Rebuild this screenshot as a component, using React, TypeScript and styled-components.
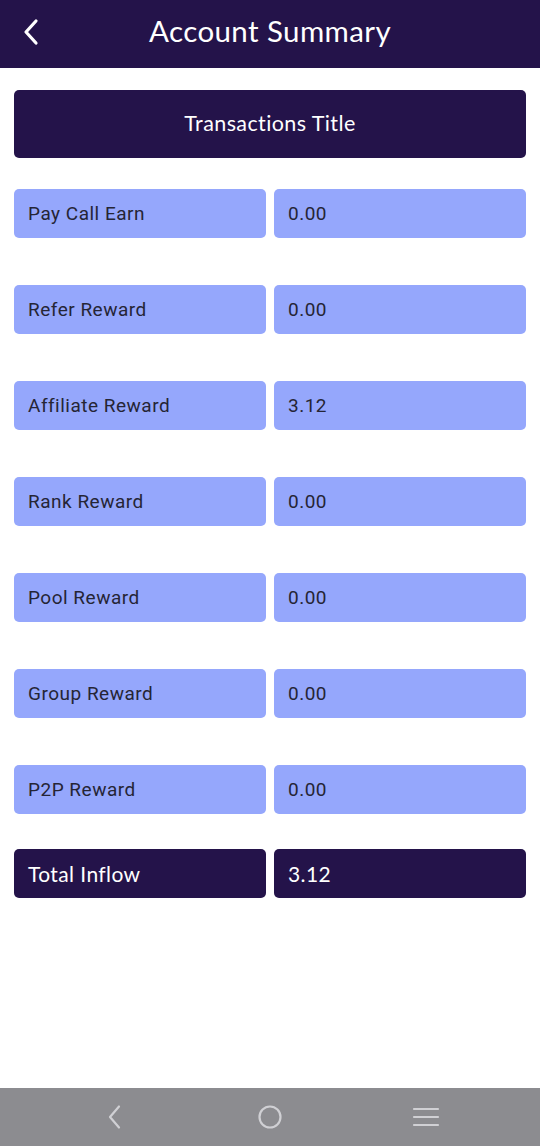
import React from "react";
import styled, { createGlobalStyle } from "styled-components";

const Global = createGlobalStyle`
  html, body { margin: 0; padding: 0; background: #fff; }
  * { box-sizing: border-box; }
`;

const DARK = "#24134a";
const LIGHT = "#95a7fc";

const Page = styled.div`
  width: 540px;
  height: 1146px;
  display: flex;
  flex-direction: column;
  background: #fff;
  overflow: hidden;
`;

const Header = styled.header`
  height: 68px;
  background: ${DARK};
  display: flex;
  align-items: center;
  position: relative;
  justify-content: center;
`;

const BackBtn = styled.div`
  position: absolute;
  left: 18px;
  top: 17px;
  width: 26px;
  height: 30px;
  display: flex;
  align-items: center;
  justify-content: center;
`;

const Title = styled.h1`
  margin: 0;
  margin-top: -7px;
  font-family: "Lato", "Noto Sans", sans-serif;
  font-weight: 400;
  font-size: 29.5px;
  color: #fff;
  letter-spacing: 0.4px;
`;

const Content = styled.main`
  padding: 22px 14px 0 14px;
  display: flex;
  flex-direction: column;
`;

const Banner = styled.div`
  height: 68px;
  padding-bottom: 2px;
  background: ${DARK};
  border-radius: 5px;
  display: flex;
  align-items: center;
  justify-content: center;
  font-family: "Lato", "Noto Sans", sans-serif;
  font-size: 21.5px;
  color: #fff;
  letter-spacing: 0.4px;
  margin-bottom: 31px;
`;

const List = styled.div`
  display: flex;
  flex-direction: column;
  gap: 47px;
`;

const Row = styled.div<{ $total?: boolean }>`
  display: grid;
  grid-template-columns: 1fr 1fr;
  gap: 8px;
  margin-top: ${(p) => (p.$total ? "-12px" : "0")};
`;

const Cell = styled.div<{ $total?: boolean }>`
  height: 49px;
  border-radius: 5px;
  background: ${(p) => (p.$total ? DARK : LIGHT)};
  color: ${(p) => (p.$total ? "#fff" : "#252535")};
  display: flex;
  align-items: center;
  padding-left: 14px;
  font-family: ${(p) =>
    p.$total ? `"Lato", "Noto Sans", sans-serif` : `"Roboto", sans-serif`};
  font-size: ${(p) => (p.$total ? "21px" : "19px")};
  letter-spacing: ${(p) => (p.$total ? "0.4px" : "0.5px")};
`;

const NavBar = styled.nav`
  margin-top: auto;
  height: 58px;
  background: #8c8c90;
  display: grid;
  grid-template-columns: repeat(3, 156px);
  justify-content: center;
  align-items: center;
  justify-items: center;
`;

const rows = [
  ["Pay Call Earn", "0.00"],
  ["Refer Reward", "0.00"],
  ["Affiliate Reward", "3.12"],
  ["Rank Reward", "0.00"],
  ["Pool Reward", "0.00"],
  ["Group Reward", "0.00"],
  ["P2P Reward", "0.00"],
];

export default function App() {
  return (
    <Page>
      <Global />
      <Header>
        <BackBtn>
          <svg width="20" height="28" viewBox="0 0 20 28">
            <path
              d="M15 3 L5 14 L15 25"
              stroke="#fff"
              strokeWidth="3.2"
              fill="none"
              strokeLinecap="round"
              strokeLinejoin="round"
            />
          </svg>
        </BackBtn>
        <Title>Account Summary</Title>
      </Header>
      <Content>
        <Banner>Transactions Title</Banner>
        <List>
          {rows.map(([k, v]) => (
            <Row key={k}>
              <Cell>{k}</Cell>
              <Cell>{v}</Cell>
            </Row>
          ))}
          <Row $total>
            <Cell $total>Total Inflow</Cell>
            <Cell $total>3.12</Cell>
          </Row>
        </List>
      </Content>
      <NavBar>
        <svg width="20" height="26" viewBox="0 0 20 26">
          <path d="M15 2.5 L6 13 L15 23.5" stroke="#d0d0d4" strokeWidth="2.2" fill="none" strokeLinecap="round" strokeLinejoin="round" />
        </svg>
        <svg width="26" height="26" viewBox="0 0 26 26">
          <circle cx="13" cy="13" r="10.5" stroke="#d0d0d4" strokeWidth="2.2" fill="none" />
        </svg>
        <svg width="28" height="26" viewBox="0 0 28 26">
          <path d="M2 5 H26 M2 13 H26 M2 21 H26" stroke="#d0d0d4" strokeWidth="2.2" strokeLinecap="round" />
        </svg>
      </NavBar>
    </Page>
  );
}
